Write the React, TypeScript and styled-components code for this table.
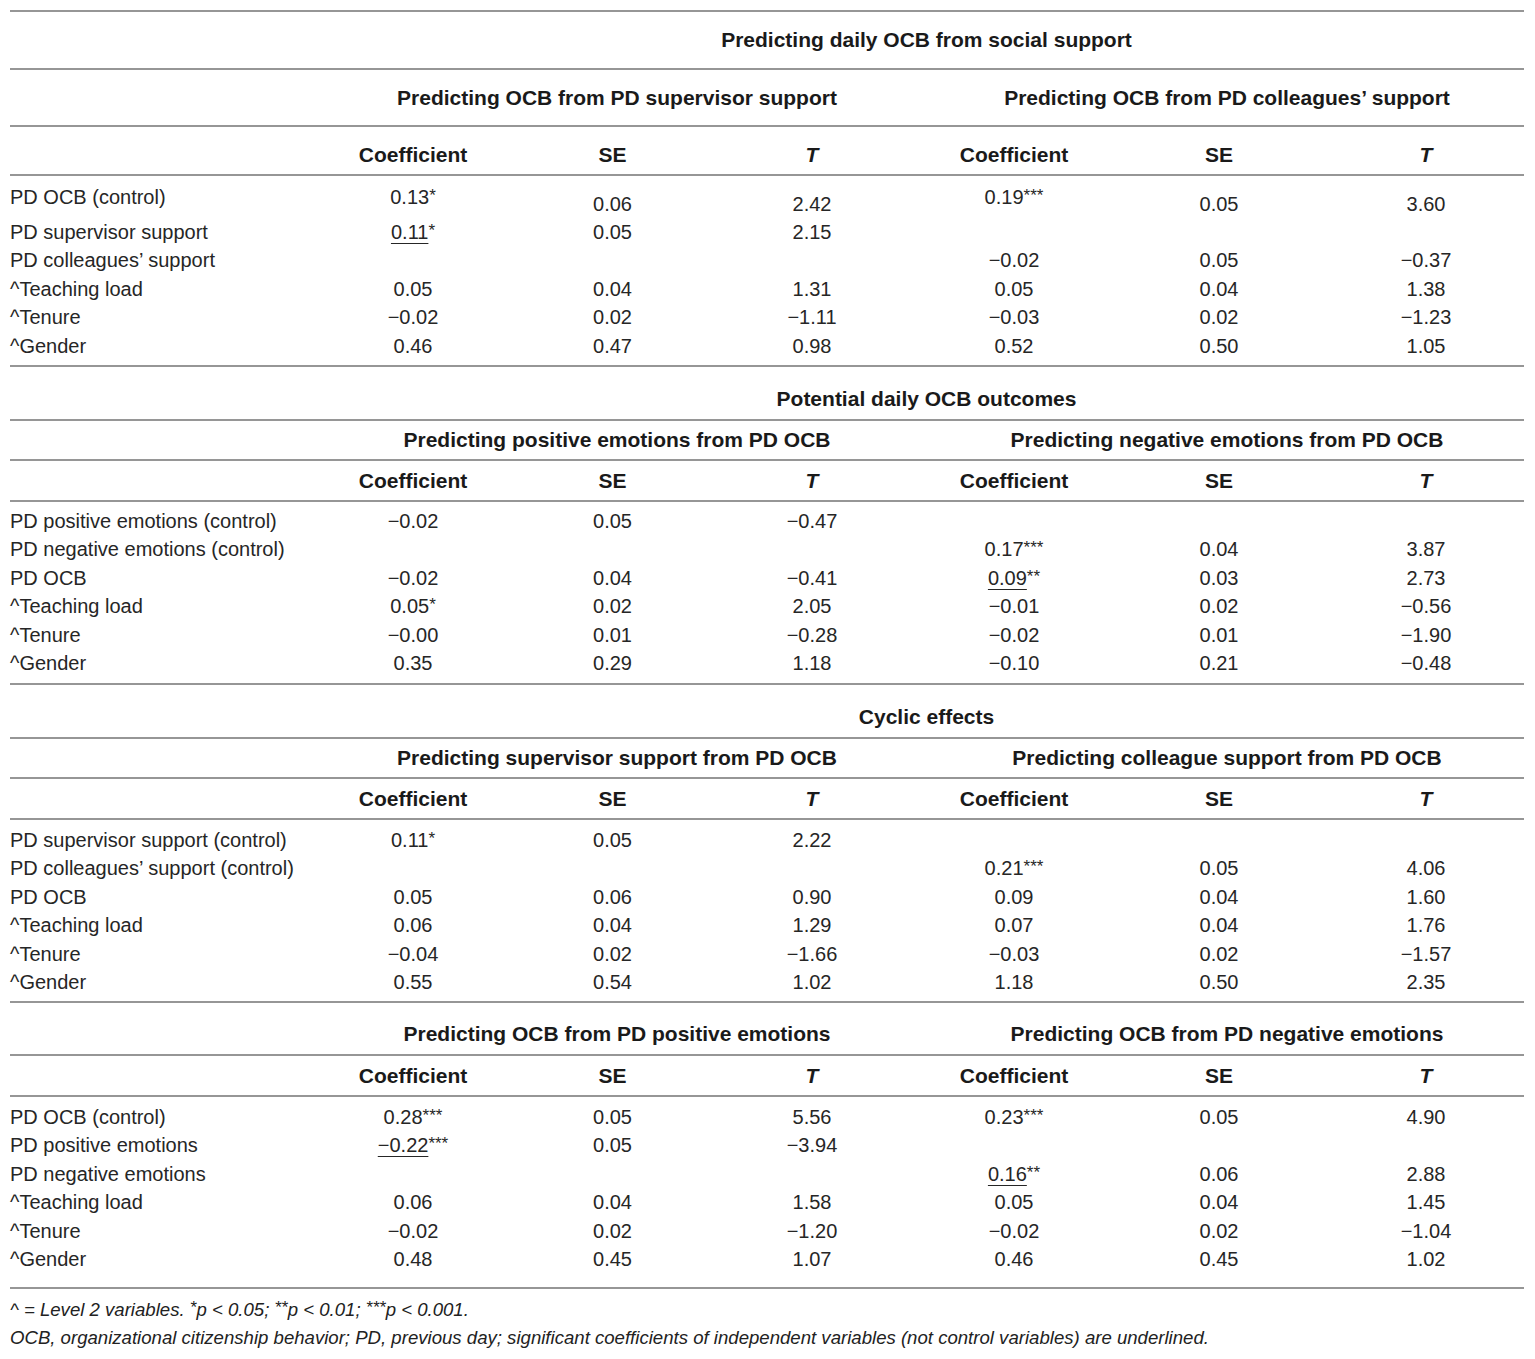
import React from "react";
import styled, { createGlobalStyle } from "styled-components";

const GlobalStyle = createGlobalStyle`
  html, body { margin: 0; padding: 0; background: #ffffff; }
  body { font-family: "Liberation Sans", Arial, sans-serif; color: #222222; }
`;

const COLS = "303px 200px 199px 200px 204px 206px 202px";
const LINE = "2px solid #969696";

const Page = styled.div`
  width: 1514px;
  padding: 10px 0 0 10px;
`;

const Table = styled.div`
  border-top: ${LINE};
`;

const Band = styled.div<{ $h: number; $pt: number }>`
  box-sizing: border-box;
  display: grid;
  grid-template-columns: ${COLS};
  height: ${(p) => p.$h}px;
  padding-top: ${(p) => p.$pt}px;
  border-bottom: ${LINE};
  font-weight: 700;
  font-size: 21px;
  line-height: 24px;
  color: #1a1a1a;
`;

const Title = styled.div`
  grid-column: 2 / -1;
  text-align: center;
  padding-left: 16px;
`;

const SubTitle = styled.div<{ $span: string; $pl: number }>`
  grid-column: ${(p) => p.$span};
  text-align: center;
  padding-left: ${(p) => p.$pl}px;
  white-space: nowrap;
`;

const HeadCell = styled.div<{ $col: number; $italic?: boolean }>`
  grid-column: ${(p) => p.$col};
  text-align: center;
  font-style: ${(p) => (p.$italic ? "italic" : "normal")};
  padding-left: ${(p) => (p.$col === 7 ? 6 : 0)}px;
`;

const DataBlock = styled.div<{ $h: number; $pt: number }>`
  box-sizing: border-box;
  height: ${(p) => p.$h}px;
  padding-top: ${(p) => p.$pt}px;
  border-bottom: ${LINE};
`;

const DataRow = styled.div<{ $h: number }>`
  display: grid;
  grid-template-columns: ${COLS};
  height: ${(p) => p.$h}px;
  font-size: 20px;
  line-height: 28.5px;
  color: #262626;
`;

const Label = styled.div`
  white-space: nowrap;
`;

const Cell = styled.div<{ $low?: boolean; $last?: boolean }>`
  text-align: center;
  white-space: nowrap;
  padding-top: ${(p) => (p.$low ? 7.5 : 0)}px;
  padding-left: ${(p) => (p.$last ? 6 : 0)}px;
`;

const Under = styled.span`
  text-decoration: underline;
  text-decoration-thickness: 1px;
  text-underline-offset: 4px;
`;

const Star = styled.span`
  font-size: 17px;
  line-height: 0;
  vertical-align: 3px;
`;

const Notes = styled.div`
  padding-top: 7px;
  font-size: 18.6px;
  line-height: 28px;
  font-style: italic;
  color: #222222;
`;

const Value: React.FC<{ v: string }> = ({ v }) => {
  if (!v) return null;
  const u = v.startsWith("_");
  const raw = u ? v.slice(1) : v;
  const m = raw.match(/^(.*?)(\*+)?$/);
  const num = m ? m[1] : raw;
  const stars = m && m[2] ? m[2] : "";
  return (
    <>
      {u ? <Under>{num}</Under> : num}
      {stars && <Star>{stars}</Star>}
    </>
  );
};

type Section = {
  title?: string;
  titleH?: number;
  titlePt?: number;
  subs: [string, string];
  subH: number;
  subPt: number;
  headH: number;
  headPt: number;
  dataH: number;
  dataPt: number;
  split?: boolean;
  rows: [string, string[]][];
};

const sections: Section[] = [
  {
    title: "Predicting daily OCB from social support",
    titleH: 58,
    titlePt: 16,
    subs: ["Predicting OCB from PD supervisor support", "Predicting OCB from PD colleagues’ support"],
    subH: 57,
    subPt: 16,
    headH: 49,
    headPt: 16,
    dataH: 191,
    dataPt: 6.7,
    split: true,
    rows: [
      ["PD OCB (control)", ["0.13*", "0.06", "2.42", "0.19***", "0.05", "3.60"]],
      ["PD supervisor support", ["_0.11*", "0.05", "2.15", "", "", ""]],
      ["PD colleagues’ support", ["", "", "", "−0.02", "0.05", "−0.37"]],
      ["^Teaching load", ["0.05", "0.04", "1.31", "0.05", "0.04", "1.38"]],
      ["^Tenure", ["−0.02", "0.02", "−1.11", "−0.03", "0.02", "−1.23"]],
      ["^Gender", ["0.46", "0.47", "0.98", "0.52", "0.50", "1.05"]],
    ],
  },
  {
    title: "Potential daily OCB outcomes",
    titleH: 54,
    titlePt: 20,
    subs: ["Predicting positive emotions from PD OCB", "Predicting negative emotions from PD OCB"],
    subH: 40,
    subPt: 7,
    headH: 41,
    headPt: 8,
    dataH: 183,
    dataPt: 4.75,
    rows: [
      ["PD positive emotions (control)", ["−0.02", "0.05", "−0.47", "", "", ""]],
      ["PD negative emotions (control)", ["", "", "", "0.17***", "0.04", "3.87"]],
      ["PD OCB", ["−0.02", "0.04", "−0.41", "_0.09**", "0.03", "2.73"]],
      ["^Teaching load", ["0.05*", "0.02", "2.05", "−0.01", "0.02", "−0.56"]],
      ["^Tenure", ["−0.00", "0.01", "−0.28", "−0.02", "0.01", "−1.90"]],
      ["^Gender", ["0.35", "0.29", "1.18", "−0.10", "0.21", "−0.48"]],
    ],
  },
  {
    title: "Cyclic effects",
    titleH: 54,
    titlePt: 20,
    subs: ["Predicting supervisor support from PD OCB", "Predicting colleague support from PD OCB"],
    subH: 40,
    subPt: 7,
    headH: 41,
    headPt: 8,
    dataH: 183,
    dataPt: 5.75,
    rows: [
      ["PD supervisor support (control)", ["0.11*", "0.05", "2.22", "", "", ""]],
      ["PD colleagues’ support (control)", ["", "", "", "0.21***", "0.05", "4.06"]],
      ["PD OCB", ["0.05", "0.06", "0.90", "0.09", "0.04", "1.60"]],
      ["^Teaching load", ["0.06", "0.04", "1.29", "0.07", "0.04", "1.76"]],
      ["^Tenure", ["−0.04", "0.02", "−1.66", "−0.03", "0.02", "−1.57"]],
      ["^Gender", ["0.55", "0.54", "1.02", "1.18", "0.50", "2.35"]],
    ],
  },
  {
    subs: ["Predicting OCB from PD positive emotions", "Predicting OCB from PD negative emotions"],
    subH: 53,
    subPt: 19,
    headH: 41,
    headPt: 8,
    dataH: 192,
    dataPt: 5.75,
    rows: [
      ["PD OCB (control)", ["0.28***", "0.05", "5.56", "0.23***", "0.05", "4.90"]],
      ["PD positive emotions", ["_−0.22***", "0.05", "−3.94", "", "", ""]],
      ["PD negative emotions", ["", "", "", "_0.16**", "0.06", "2.88"]],
      ["^Teaching load", ["0.06", "0.04", "1.58", "0.05", "0.04", "1.45"]],
      ["^Tenure", ["−0.02", "0.02", "−1.20", "−0.02", "0.02", "−1.04"]],
      ["^Gender", ["0.48", "0.45", "1.07", "0.46", "0.45", "1.02"]],
    ],
  },
];

const headers = ["Coefficient", "SE", "T", "Coefficient", "SE", "T"];

const SectionView: React.FC<{ s: Section }> = ({ s }) => (
  <>
    {s.title && (
      <Band $h={s.titleH!} $pt={s.titlePt!}>
        <Title>{s.title}</Title>
      </Band>
    )}
    <Band $h={s.subH} $pt={s.subPt}>
      <SubTitle $span="2 / 5" $pl={9}>{s.subs[0]}</SubTitle>
      <SubTitle $span="5 / 8" $pl={18}>{s.subs[1]}</SubTitle>
    </Band>
    <Band $h={s.headH} $pt={s.headPt}>
      {headers.map((h, i) => (
        <HeadCell key={i} $col={i + 2} $italic={h === "T"}>
          {h}
        </HeadCell>
      ))}
    </Band>
    <DataBlock $h={s.dataH} $pt={s.dataPt}>
      {s.rows.map(([label, vals], ri) => {
        const split = s.split && ri === 0;
        return (
          <DataRow key={ri} $h={split ? 35 : 28.5}>
            <Label>{label}</Label>
            {vals.map((v, ci) => (
              <Cell key={ci} $low={split && ci % 3 !== 0} $last={ci === 5}>
                <Value v={v} />
              </Cell>
            ))}
          </DataRow>
        );
      })}
    </DataBlock>
  </>
);

export default function App() {
  return (
    <>
      <GlobalStyle />
      <Page>
        <Table>
          {sections.map((s, i) => (
            <SectionView key={i} s={s} />
          ))}
        </Table>
        <Notes>
          <div>
            ^ = Level 2 variables. <Star>*</Star>p &lt; 0.05; <Star>**</Star>p &lt; 0.01; <Star>***</Star>p &lt; 0.001.
          </div>
          <div>
            OCB, organizational citizenship behavior; PD, previous day; significant coefficients of independent variables (not control variables) are underlined.
          </div>
        </Notes>
      </Page>
    </>
  );
}
